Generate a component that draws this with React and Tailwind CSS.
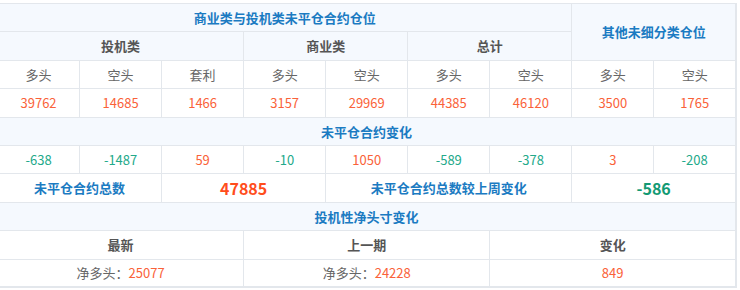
import React from 'react'

const ORANGE = 'text-[#fa6239]'
const GREEN = 'text-[#23a98a]'

const th = 'border border-[#e3e7ec] bg-[#f5f9fe] h-[28.4px] text-center font-bold text-[#1b7bc2]'
const sub = 'border border-[#e3e7ec] bg-[#f5f9fe] h-[28.4px] text-center font-bold text-[#555]'
const td = 'border border-[#e3e7ec] bg-white h-[28.4px] text-center'

const positions = [39762, 14685, 1466, 3157, 29969, 44385, 46120, 3500, 1765]
const changes = [-638, -1487, 59, -10, 1050, -589, -378, 3, -208]
const labels = ['多头', '空头', '套利', '多头', '空头', '多头', '空头', '多头', '空头']

const App = () => {
  return (
    <div className="w-[740px] h-[290px] bg-white overflow-hidden pt-[3px] font-['Noto_Sans_CJK_SC',sans-serif] text-[13px]">
      <table className="w-[740px] ml-[-3px] border-collapse table-fixed border-r-2 border-r-[#e3e7ec] border-b-2 border-b-[#e3e7ec]">
        <tbody>
          <tr>
            <td colSpan={7} className={th}>商业类与投机类未平仓合约仓位</td>
            <td colSpan={2} rowSpan={2} className={th}>其他未细分类仓位</td>
          </tr>
          <tr>
            <td colSpan={3} className={sub}>投机类</td>
            <td colSpan={2} className={sub}>商业类</td>
            <td colSpan={2} className={sub}>总计</td>
          </tr>
          <tr>
            {labels.map((l, i) => (
              <td key={i} className={`${td} text-[#666]`}>{l}</td>
            ))}
          </tr>
          <tr>
            {positions.map((n, i) => (
              <td key={i} className={`${td} ${ORANGE}`}>{n}</td>
            ))}
          </tr>
          <tr>
            <td colSpan={9} className={th}>未平仓合约变化</td>
          </tr>
          <tr>
            {changes.map((n, i) => (
              <td key={i} className={`${td} ${n < 0 ? GREEN : ORANGE}`}>{n}</td>
            ))}
          </tr>
          <tr>
            <td colSpan={2} className={`${td} font-bold text-[#1b7bc2]`}>未平仓合约总数</td>
            <td colSpan={2} className={`${td} font-bold text-[16px] text-[#ff4d1c]`}>47885</td>
            <td colSpan={3} className={`${td} font-bold text-[#1b7bc2]`}>未平仓合约总数较上周变化</td>
            <td colSpan={2} className={`${td} font-bold text-[16px] text-[#139a74]`}>-586</td>
          </tr>
          <tr>
            <td colSpan={9} className={th}>投机性净头寸变化</td>
          </tr>
          <tr>
            <td colSpan={3} className={`${td} font-bold text-[#555]`}>最新</td>
            <td colSpan={3} className={`${td} font-bold text-[#555]`}>上一期</td>
            <td colSpan={3} className={`${td} font-bold text-[#555]`}>变化</td>
          </tr>
          <tr>
            <td colSpan={3} className={`${td} text-[#666]`}>净多头：<span className={ORANGE}>25077</span></td>
            <td colSpan={3} className={`${td} text-[#666]`}>净多头：<span className={ORANGE}>24228</span></td>
            <td colSpan={3} className={`${td} ${ORANGE}`}>849</td>
          </tr>
        </tbody>
      </table>
    </div>
  )
}

export default App
